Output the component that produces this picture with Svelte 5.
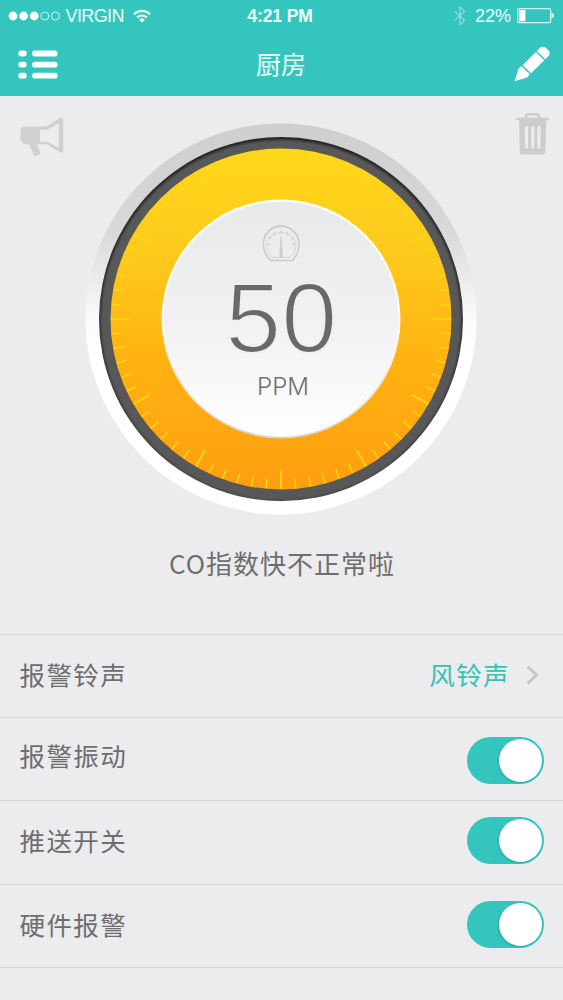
<script lang="ts">
	let room: string = $state('厨房');
	let ppm: number = $state(50);
	let ringtone: string = $state('风铃声');

	let switches = $state([
		{ name: 'vibrate', label: '报警振动', on: true },
		{ name: 'push', label: '推送开关', on: true },
		{ name: 'hardware', label: '硬件报警', on: true }
	]);

	// one tick every 5 degrees, a long one every 30
	const ticks = Array.from({ length: 72 }, (_, i) => i * 5);

	function tickOpacity(angle: number) {
		const down = (1 - Math.cos((angle * Math.PI) / 180)) / 2;
		return 0.5 + down * 0.45;
	}
</script>

<div class="screen">
	<header>
		<div class="status">
			<div class="carrier">
				<svg width="52" height="12" viewBox="0 0 52 12">
					{#each [0, 1, 2, 3, 4] as i}
						<circle
							cx={5 + i * 10.6}
							cy="6"
							r={i < 3 ? 4.4 : 4}
							fill={i < 3 ? '#fff' : 'none'}
							stroke={i < 3 ? 'none' : '#d5fbf5'}
							stroke-width="0.9"
						/>
					{/each}
				</svg>
				<span class="virgin">VIRGIN</span>
				<svg class="wifi" width="18" height="14" viewBox="0 0 18 14" fill="none" stroke="#e9fffc">
					<path d="M1 5.2a11.3 11.3 0 0 1 16 0" stroke-width="2.1" />
					<path d="M4 8.5a7.1 7.1 0 0 1 10 0" stroke-width="2" />
					<path d="M9 13.5L6.2 10.7a4 4 0 0 1 5.6 0z" fill="#fff" stroke="none" />
				</svg>
			</div>
			<span class="time">4:21 PM</span>
			<div class="power">
				<svg width="12" height="20" viewBox="0 0 12 20" fill="none" stroke="#8be3da" stroke-width="1.2">
					<path d="M0.8 5.3L10.6 14.2L6 18.6V1.2L10.6 5.3L0.8 14.4" />
				</svg>
				<span class="percent">22%</span>
				<svg width="37" height="16" viewBox="0 0 37 16">
					<rect x="0.6" y="0.6" width="33" height="14" rx="1.6" fill="none" stroke="#d8f8f4" stroke-width="1.2" />
					<rect x="2" y="2" width="6.4" height="11.2" fill="#fff" />
					<path d="M34.4 4.5c3.4 1 3.4 5.2 0 6.2z" fill="#d8f8f4" />
				</svg>
			</div>
		</div>
		<nav>
			<button aria-label="menu">
				<svg width="40" height="29" viewBox="0 0 40 29" fill="#fff">
					{#each [0.6, 11.7, 22.8] as y}
						<rect x="0.3" {y} width="8.4" height="5.8" rx="2.9" />
						<rect x="14.2" {y} width="25.3" height="5.8" rx="2.6" />
					{/each}
				</svg>
			</button>
			<h1>{room}</h1>
			<button aria-label="edit">
				<svg width="36" height="36" viewBox="0 0 36 36" fill="#fff">
					<path d="M0.6 35.2L4.2 23.8C4.6 22.5 6.2 20.6 7.6 20.2L15.8 28.2C15.2 29.5 13.5 31.3 12.3 31.8z" />
					<path d="M8.6 19.2L21.8 6L30.2 14.2L17 27.3z" />
					<path d="M22.8 5L26 1.8C27.3 0.3 30 0.4 31.5 1.6L34.6 4.6C36 6 36 8.4 34.6 9.9L31.2 13.2z" />
				</svg>
			</button>
		</nav>
	</header>

	<main>
		<svg class="horn" width="44" height="42" viewBox="0 0 44 42" fill="#d0d0d1">
			<path fill-rule="evenodd" d="M4.5 9.5H26.5L40.5 0.8Q43.2-0.4 43.2 2.5V33.5Q43.2 36.5 40.5 35.4L26.5 27.3H5.5Q0.5 26 0.5 20V13.5Q0.5 10 4.5 9.5zM20 12.8V24.5L27.5 24.8L38.8 31V6L27.5 12.8z" />
			<path d="M8.5 26.5L14.5 39.5L20.5 37L16.5 26.5z" />
		</svg>
		<svg class="trash" width="34" height="43" viewBox="0 0 34 43">
			<path d="M10 5V3Q10.5 1.2 12.5 1.2H20.5Q22.8 1.2 23 3V5" fill="none" stroke="#cdcdcf" stroke-width="2.4" />
			<path d="M0.5 4.8H33V7H0.5zM3 7H30.5V10H3z" fill="#cdcdcf" />
			<path fill-rule="evenodd" d="M3.2 9H30.2L29.4 39Q29.3 41.5 27 41.5H6Q3.9 41.5 3.8 39zM8.8 13.3L9.2 35.5H12.2V13.3zM15.2 13.3V35.5H18.3V13.3zM21.3 13.3V35.5H24.4L24.8 13.3z" fill="#cdcdcf" />
		</svg>

		<svg class="dial" width="400" height="400" viewBox="0 0 400 400">
			<defs>
				<linearGradient id="rim" x1="0" y1="0" x2="0" y2="1">
					<stop offset="0" stop-color="#cfcecf" />
					<stop offset="0.28" stop-color="#d9d8da" />
					<stop offset="0.5" stop-color="#fbfbfc" />
					<stop offset="0.6" stop-color="#ffffff" />
				</linearGradient>
				<linearGradient id="edge" x1="0" y1="0" x2="0" y2="1">
					<stop offset="0" stop-color="#252526" />
					<stop offset="1" stop-color="#464646" />
				</linearGradient>
				<linearGradient id="amber" x1="0" y1="0" x2="0" y2="1">
					<stop offset="0" stop-color="#ffd71a" />
					<stop offset="0.28" stop-color="#fecb1d" />
					<stop offset="0.6" stop-color="#ffb413" />
					<stop offset="1" stop-color="#ff9e10" />
				</linearGradient>
				<linearGradient id="face" x1="0" y1="0" x2="0" y2="1">
					<stop offset="0" stop-color="#e8e9e9" />
					<stop offset="0.55" stop-color="#f2f2f4" />
					<stop offset="1" stop-color="#ffffff" />
				</linearGradient>
				<linearGradient id="lip" x1="0" y1="0" x2="0" y2="1">
					<stop offset="0" stop-color="#ffffff" />
					<stop offset="0.6" stop-color="#fbf7ec" />
					<stop offset="1" stop-color="#d9d4c8" />
				</linearGradient>
				<filter id="soft" x="-5%" y="-5%" width="110%" height="110%">
					<feGaussianBlur stdDeviation="1" />
				</filter>
			</defs>

			<circle cx="200" cy="200" r="195.5" fill="url(#rim)" />
			<circle cx="200" cy="200" r="182" fill="url(#edge)" />
			<circle cx="200" cy="200.8" r="180" fill="#595959" filter="url(#soft)" />
			<circle cx="200" cy="200" r="170.5" fill="url(#amber)" />

			{#each ticks as angle}
				<line
					x1="200"
					x2="200"
					y1="30"
					y2={angle % 30 === 0 ? 48.5 : 40}
					stroke="#ffe30a"
					stroke-width={angle % 30 === 0 ? 1.7 : 1.4}
					opacity={tickOpacity(angle)}
					transform="rotate({angle} 200 200)"
				/>
			{/each}

			<circle cx="200" cy="200" r="119.5" fill="url(#lip)" />
			<circle cx="200" cy="200.3" r="117.5" fill="url(#face)" />

			<g fill="none" stroke="#cbcbcc" stroke-width="1.7" transform="translate(-0.5 0)">
				<path d="M190.5 141.5H212Q218.5 134.5 218.5 125A17.8 17.8 0 0 0 182.9 125Q182.9 135 190.5 141.5z" />
				<path
					d="M192 138.5H209.5Q215.5 133.5 215.5 125.5A15 15 0 0 0 186 125.5Q186 134 192 138.5z"
					stroke-width="0.7"
				/>
				<path
					d="M200.5 111.5v3M193.5 113.5l1.2 2.4M188.2 118.5l2.4 1.4M187 125.5h3M207.5 113.5l-1.2 2.4M213 118.5l-2.4 1.4M214.3 125.5h-3"
					stroke-width="1.2"
				/>
				<path d="M200.5 118L199.2 138H202z" fill="#cbcbcc" stroke-width="0.8" />
			</g>

			<text class="value" x="200.3" y="232.5" textLength="112" lengthAdjust="spacingAndGlyphs">{ppm}</text>
			<text class="unit" x="202" y="275.5" textLength="52" lengthAdjust="spacingAndGlyphs">PPM</text>
		</svg>

		<p class="message">CO指数快不正常啦</p>

		<ul>
			<li class="ringtone">
				<span>报警铃声</span>
				<span class="choice">
					{ringtone}
					<svg width="13" height="20" viewBox="0 0 13 20" fill="none" stroke="#c6c6c9" stroke-width="3">
						<path d="M1.5 1.5L10.5 10L1.5 18.5" />
					</svg>
				</span>
			</li>
			{#each switches as item}
				<li class={item.name}>
					<span>{item.label}</span>
					<button
						class="toggle"
						class:on={item.on}
						aria-label={item.label}
						onclick={() => (item.on = !item.on)}
					>
						<i></i>
					</button>
				</li>
			{/each}
		</ul>
	</main>
</div>

<style>
	:global(body) {
		margin: 0;
	}

	.screen {
		width: 563px;
		height: 1000px;
		overflow: hidden;
		background: #ecebed;
		color: #6e6e6f;
		font-family: 'Liberation Sans', 'Noto Sans CJK SC', sans-serif;
	}

	button {
		padding: 0;
		border: 0;
		background: none;
	}

	svg {
		display: block;
	}

	header {
		height: 96px;
		background: #34c6be;
		color: #effffd;
	}

	.status {
		height: 32px;
		padding: 0 9px 0 8px;
		display: grid;
		grid-template-columns: 1fr auto 1fr;
		align-items: center;
		font-size: 18px;
		line-height: 32px;
	}

	.carrier,
	.power {
		display: flex;
		align-items: center;
	}

	.power {
		justify-content: flex-end;
	}

	.virgin {
		margin-left: 5.5px;
		letter-spacing: -0.6px;
	}

	.wifi {
		margin-left: 9px;
	}

	.time {
		margin-right: 2px;
		font-weight: bold;
		font-size: 17.5px;
		letter-spacing: -0.1px;
	}

	.percent {
		margin: 0 6px 0 9px;
	}

	nav {
		height: 64px;
		padding: 0 13px 0 18px;
		display: grid;
		grid-template-columns: 1fr auto 1fr;
		align-items: center;
	}

	nav button {
		justify-self: start;
	}

	nav button:last-child {
		justify-self: end;
	}

	h1 {
		margin: 0 6px 2px 0;
		font-size: 25px;
		font-weight: 400;
		line-height: 36px;
		font-family: 'Noto Sans CJK SC', sans-serif;
	}

	main {
		display: grid;
		grid-template-columns: 80px 400px 83px;
		grid-template-rows: 446px 92px auto;
	}

	.horn {
		margin: 21px 0 0 20px;
	}

	.dial {
		grid-area: 1 / 2;
		margin: 23px 0 0 0.5px;
	}

	.trash {
		grid-area: 1 / 3;
		margin: 17px 0 0 36px;
	}

	/* the outline in the face colour thins the digits */
	.value {
		font-family: 'Liberation Sans', sans-serif;
		font-size: 98px;
		fill: #69696a;
		stroke: #f0f0f1;
		stroke-width: 2.2px;
		text-anchor: middle;
	}

	.unit {
		font-family: Inter, Roboto, sans-serif;
		font-weight: 300;
		font-size: 24.5px;
		fill: #707071;
		text-anchor: middle;
	}

	.message {
		grid-area: 2 / 1 / 3 / 4;
		margin: 3px 0 0 1px;
		text-align: center;
		font-family: 'Noto Sans CJK SC', sans-serif;
		font-size: 26px;
		line-height: 36px;
		letter-spacing: 1px;
	}

	ul {
		grid-area: 3 / 1 / 4 / 4;
		margin: 0;
		padding: 0;
		list-style: none;
		border-top: 1px solid #d6d5d7;
		font-family: 'Noto Sans CJK SC', sans-serif;
		font-size: 25.5px;
		line-height: 36px;
		letter-spacing: 1.4px;
	}

	li {
		height: 83px;
		padding: 0 19px;
		box-sizing: border-box;
		display: flex;
		align-items: center;
		justify-content: space-between;
		border-bottom: 1px solid #d6d5d7;
	}

	li > span {
		margin: 0 0 4px 0.5px;
	}

	.vibrate > span {
		margin-bottom: 8px;
	}

	.vibrate .toggle {
		margin-top: 3px;
	}

	.push {
		height: 84px;
	}

	.push > span {
		margin-bottom: 6px;
	}

	.push .toggle {
		margin-bottom: 4px;
	}

	.hardware .toggle {
		margin-bottom: 3px;
	}

	.choice {
		display: flex;
		align-items: center;
		gap: 16px;
		padding-right: 5px;
		color: #34c2b5;
	}

	.choice svg {
		margin-top: 2px;
	}

	.toggle {
		width: 77px;
		height: 47px;
		padding: 2px;
		display: flex;
		border-radius: 24px;
		background: #c9c9cb;
	}

	.toggle.on {
		justify-content: flex-end;
		background: #34c6be;
	}

	.toggle i {
		width: 43px;
		height: 43px;
		border-radius: 50%;
		background: #fff;
		box-shadow: -1px 1px 2px rgba(0, 90, 85, 0.25);
	}
</style>
